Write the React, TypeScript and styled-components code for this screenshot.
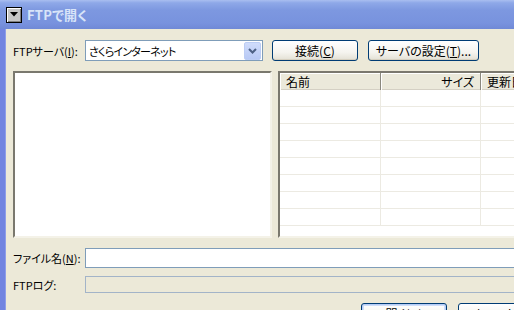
import React from 'react';
import styled, { createGlobalStyle } from 'styled-components';

const GlobalStyle = createGlobalStyle`
  html, body {
    margin: 0;
    padding: 0;
    overflow: hidden;
    background: #ece9d8;
  }
  body {
    font-family: "Noto Sans CJK JP", "Noto Sans", sans-serif;
    font-size: 12px;
    font-feature-settings: "palt" 1;
    color: #000;
  }
`;

const Window = styled.div`
  width: 545px;
  display: flex;
  flex-direction: column;
`;

const TitleBar = styled.div`
  height: 29px;
  display: flex;
  align-items: center;
  gap: 5px;
  padding-left: 6px;
  background: linear-gradient(to bottom, #a9bef0 0%, #8ea8e8 10%, #7d98e0 35%, #7892de 80%, #7089d6 100%);
`;

const MenuButton = styled.div`
  width: 14px;
  height: 14px;
  border: 1px solid #000;
  background: #c6c6c6;
  box-shadow: inset 1px 1px #fff, inset -1px -1px #808080;
  display: flex;
  align-items: center;
  justify-content: center;
`;

const Title = styled.span`
  font-size: 13px;
  font-weight: bold;
  color: #d8e4f8;
  letter-spacing: 0.2px;
`;

const Frame = styled.div`
  display: flex;
  border-left: 5px solid #7184e0;
  box-shadow: inset 1px 0 #8e9ee8;
`;

const Content = styled.div`
  flex: 1;
  display: flex;
  flex-direction: column;
  padding: 11px 8px 20px 8px;
`;

const Row = styled.div<{ $top?: number; $height: number }>`
  display: flex;
  align-items: center;
  margin-top: ${p => p.$top ?? 0}px;
  height: ${p => p.$height}px;
`;

const Label = styled.label`
  width: 72px;
  flex: none;
  font-size: 11px;
  line-height: 14px;
  white-space: nowrap;
`;

const Combo = styled.div`
  width: 173px;
  height: 19px;
  border: 1px solid #7f9db9;
  background: #fff;
  display: flex;
  align-items: center;
  justify-content: space-between;
  padding-left: 3px;
  box-sizing: content-box;
`;

const ComboText = styled.span`
  font-size: 11px;
  letter-spacing: -0.8px;
`;

const DropButton = styled.div`
  width: 15px;
  height: 16px;
  margin-right: 1px;
  border: 1px solid #bccdf4;
  border-radius: 2px;
  background: linear-gradient(to bottom, #d0dcfb, #b8c9f5);
  display: flex;
  align-items: center;
  justify-content: center;
`;

const ButtonGroup = styled.div`
  display: flex;
  gap: 10px;
  margin-left: 9px;
`;

const Button = styled.button<{ $width: number; $default?: boolean }>`
  width: ${p => p.$width}px;
  height: 21px;
  padding: 0;
  border: 1px solid #003c74;
  border-radius: 3px;
  background: linear-gradient(to bottom, #ffffff 0%, #f5f4ef 60%, #e3e0d4 100%);
  box-shadow: ${p => (p.$default ? 'inset 0 0 0 1px #b6cdf7, inset 0 0 0 2px #cfdef9' : 'inset 0 -1px #d6d0c0')};
  font-family: inherit;
  font-size: 12px;
  font-feature-settings: "palt" 1;
  color: #000;
  display: flex;
  align-items: center;
  justify-content: center;
  line-height: 1;
`;

const Panels = styled.div`
  display: flex;
  gap: 6px;
  margin-top: 10px;
  height: 167px;
`;

const Sunken = styled.div`
  border: 2px solid;
  border-color: #7a786e #f4f2e8 #f4f2e8 #7a786e;
  background: #fff;
  box-sizing: border-box;
`;

const Tree = styled(Sunken)`
  width: 259px;
  flex: none;
`;

const List = styled(Sunken)`
  flex: 1;
  display: grid;
  grid-template-columns: 101px 100px 1fr;
  grid-auto-rows: 17px;
  align-content: start;
  overflow: hidden;
`;

const HeaderCell = styled.div<{ $align?: 'left' | 'right' }>`
  background: #ebe9db;
  box-shadow: inset 1px 1px #fff, inset 0 -1px #d4d0c4;
  border-right: 1px solid #8a887e;
  display: flex;
  align-items: center;
  justify-content: ${p => (p.$align === 'right' ? 'flex-end' : 'flex-start')};
  padding: 0 6px;
  font-size: 12px;
  white-space: nowrap;
`;

const Cell = styled.div`
  border-right: 1px solid #eceae2;
  border-bottom: 1px solid #eceae2;
`;

const TextBox = styled.div<{ $disabled?: boolean }>`
  flex: 1;
  height: 100%;
  box-sizing: border-box;
  border: 1px solid ${p => (p.$disabled ? '#a3b4c8' : '#7f9db9')};
  background: ${p => (p.$disabled ? '#ece9d8' : '#fff')};
`;

const Footer = styled.div`
  display: flex;
  justify-content: flex-end;
  gap: 11px;
  margin-top: 10px;
`;

const Chevron = () => (
  <svg width="9" height="6" viewBox="0 0 9 6">
    <polyline points="1,1 4.5,4.5 8,1" fill="none" stroke="#4d6185" strokeWidth="2" />
  </svg>
);

const Triangle = () => (
  <svg width="8" height="5" viewBox="0 0 8 5">
    <polygon points="0,0 8,0 4,4.5" fill="#000" />
  </svg>
);

const columns = 3;
const rows = 8;

const App: React.FC = () => {
  const cells = Array.from({ length: rows * columns });
  return (
    <>
      <GlobalStyle />
      <Window>
        <TitleBar>
          <MenuButton>
            <Triangle />
          </MenuButton>
          <Title>FTPで開く</Title>
        </TitleBar>
        <Frame>
          <Content>
            <Row $height={21}>
              <Label>FTPサーバ(<u>I</u>):</Label>
              <Combo>
                <ComboText>さくらインターネット</ComboText>
                <DropButton>
                  <Chevron />
                </DropButton>
              </Combo>
              <ButtonGroup>
                <Button $width={86}>接続(<u>C</u>)</Button>
                <Button $width={111}>サーバの設定(<u>T</u>)...</Button>
              </ButtonGroup>
            </Row>
            <Panels>
              <Tree />
              <List>
                <HeaderCell>名前</HeaderCell>
                <HeaderCell $align="right">サイズ</HeaderCell>
                <HeaderCell>更新日時</HeaderCell>
                {cells.map((_, i) => (
                  <Cell key={i} />
                ))}
              </List>
            </Panels>
            <Row $top={10} $height={20}>
              <Label>ファイル名(<u>N</u>):</Label>
              <TextBox />
            </Row>
            <Row $top={8} $height={17}>
              <Label>FTPログ:</Label>
              <TextBox $disabled />
            </Row>
            <Footer>
              <Button $width={86} $default>開く(<u>O</u>)</Button>
              <Button $width={86}>キャンセル</Button>
            </Footer>
          </Content>
        </Frame>
      </Window>
    </>
  );
};

export default App;
